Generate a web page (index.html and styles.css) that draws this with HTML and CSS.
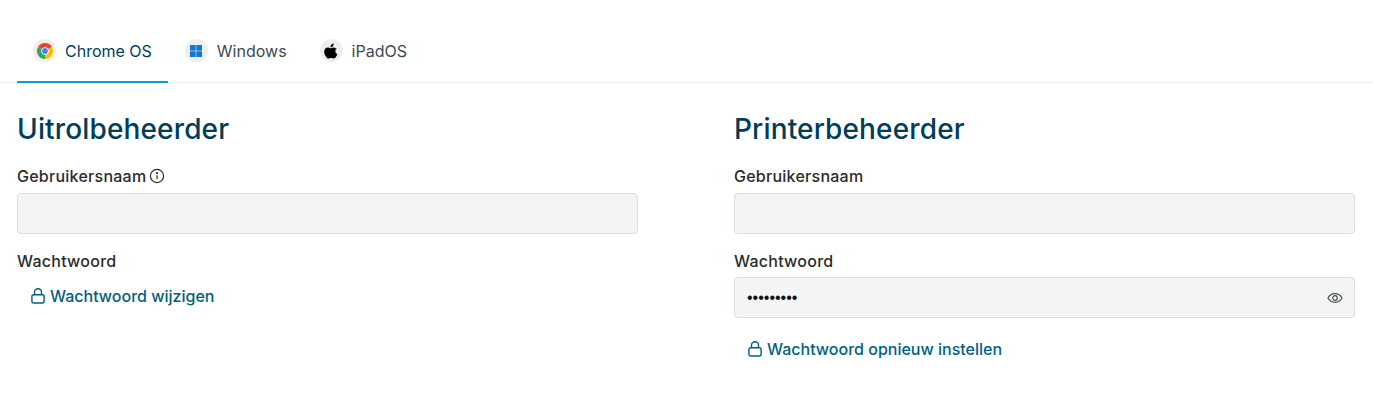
FILE: index.html
```html
<!DOCTYPE html>
<html lang="en">
<head>
    <meta charset="UTF-8">
    <meta name="viewport" content="width=device-width, initial-scale=1.0">
    <title>Beheerders</title>
    <link rel="stylesheet" href="styles.css">
</head>
<body>
    <nav class="tabs">
        <a class="tab active" href="#chrome">
            <span class="tab-icon">
                <svg width="16" height="16" viewBox="0 0 16 16">
                    <path d="M8 8 L1.07 4 A8 8 0 0 1 14.93 4 Z" fill="#ea4335"/>
                    <path d="M8 8 L14.93 4 A8 8 0 0 1 8 16 Z" fill="#fbbc04"/>
                    <path d="M8 8 L8 16 A8 8 0 0 1 1.07 4 Z" fill="#34a853"/>
                    <circle cx="8" cy="8" r="3.7" fill="#fff"/>
                    <circle cx="8" cy="8" r="2.9" fill="#4285f4"/>
                </svg>
            </span>
            Chrome OS
        </a>
        <a class="tab" href="#windows">
            <span class="tab-icon">
                <svg width="14" height="14" viewBox="0 0 14 14" fill="#0f78d4">
                    <rect x="1" y="1" width="5.7" height="5.7"/>
                    <rect x="7.3" y="1" width="5.7" height="5.7"/>
                    <rect x="1" y="7.3" width="5.7" height="5.7"/>
                    <rect x="7.3" y="7.3" width="5.7" height="5.7"/>
                </svg>
            </span>
            Windows
        </a>
        <a class="tab" href="#ipados">
            <span class="tab-icon">
                <svg width="14" height="16" viewBox="0 0 14 16" fill="#000">
                    <path d="M9.6 0.6c.1 1-.3 1.9-.8 2.6-.6.7-1.4 1.2-2.3 1.1-.1-.9.3-1.9.8-2.5C7.9 1.1 8.9.6 9.6.6z"/>
                    <path d="M12.9 5.5c-.9.6-1.5 1.500-1.500 2.700 0 1.400.8 2.400 2 2.900-.3.900-.7 1.700-1.200 2.500-.7 1-1.400 2-2.500 2-1 0-1.400-.6-2.600-.6s-1.600.6-2.600.6c-1.100 0-1.900-1.100-2.600-2.100C.9 12.200.2 10.400.2 8.700c0-2.700 1.800-4.200 3.500-4.200 1.100 0 2 .7 2.700.7.700 0 1.700-.8 3-.8 1 0 2.400.4 3.500 2.100z"/>
                </svg>
            </span>
            iPadOS
        </a>
    </nav>

    <div class="columns">
        <section class="panel">
            <h2>Uitrolbeheerder</h2>
            <div class="field">
                <label>Gebruikersnaam
                    <svg class="info" width="16" height="16" viewBox="0 0 16 16" fill="none" stroke="#2b2b2b" stroke-width="1.2">
                        <circle cx="8" cy="8" r="6.6"/>
                        <path d="M8 7.200v4"/>
                        <circle cx="8" cy="5" r="0.5" fill="#2b2b2b"/>
                    </svg>
                </label>
                <div class="input"></div>
            </div>
            <div class="field">
                <label>Wachtwoord</label>
                <a class="lock-link" href="#wijzigen">
                    <svg width="14" height="16" viewBox="0 0 14 16" fill="none" stroke="#005f7f" stroke-width="1.400">
                        <rect x="0.900" y="6.700" width="12.200" height="8.300" rx="1.800"/>
                        <path d="M3.500 6.700V4.300a3.500 3.500 0 0 1 7 0v2.400"/>
                    </svg>
                    Wachtwoord wijzigen
                </a>
            </div>
        </section>

        <section class="panel">
            <h2>Printerbeheerder</h2>
            <div class="field">
                <label>Gebruikersnaam</label>
                <div class="input"></div>
            </div>
            <div class="field">
                <label>Wachtwoord</label>
                <div class="input">
                    <span class="dots">•••••••••</span>
                    <svg class="eye" width="16" height="16" viewBox="0 0 16 16" fill="none" stroke="#4a4f52" stroke-width="1.200">
                        <path d="M1 8c1.500-2.700 4-4.300 7-4.300s5.500 1.600 7 4.300c-1.500 2.700-4 4.300-7 4.300S2.500 10.700 1 8z"/>
                        <circle cx="8" cy="8" r="2.300"/>
                    </svg>
                </div>
                <a class="lock-link" href="#opnieuw">
                    <svg width="14" height="16" viewBox="0 0 14 16" fill="none" stroke="#005f7f" stroke-width="1.400">
                        <rect x="0.900" y="6.700" width="12.200" height="8.300" rx="1.800"/>
                        <path d="M3.500 6.700V4.300a3.500 3.500 0 0 1 7 0v2.400"/>
                    </svg>
                    Wachtwoord opnieuw instellen
                </a>
            </div>
        </section>
    </div>
</body>
</html>
```

FILE: styles.css
```css
body {
    font-family: Inter, "Noto Sans", sans-serif;
    margin: 0;
    padding: 0;
    background-color: #fff;
    color: #2b2b2b;
}

.tabs {
    display: flex;
    gap: 1px;
    margin-top: 20px;
    padding-left: 17px;
    height: 63px;
    box-sizing: border-box;
    border-bottom: 1px solid #eef0f0;
}

.tab {
    display: flex;
    align-items: center;
    gap: 9px;
    height: 63px;
    box-sizing: border-box;
    padding: 0 16px;
    border-bottom: 2px solid transparent;
    color: #3d4a52;
    font-size: 16px;
    text-decoration: none;
}

.tab.active {
    color: #003f5c;
    border-bottom-color: #0a9ee0;
}

.tab-icon {
    display: flex;
    align-items: center;
    justify-content: center;
    width: 23px;
    height: 23px;
    border-radius: 50%;
    background-color: #eeeeee;
}

.columns {
    display: grid;
    grid-template-columns: 621px 621px;
    column-gap: 96px;
    padding: 0 18px 0 17px;
}

h2 {
    margin: 29px 0 20px;
    color: #003d5b;
    font-size: 28px;
    line-height: 34px;
    font-weight: 500;
    letter-spacing: 0.15px;
}

.field {
    margin-bottom: 17px;
}

label {
    display: flex;
    align-items: center;
    gap: 3px;
    height: 20px;
    margin-bottom: 7px;
    font-size: 16px;
    font-weight: 500;
    letter-spacing: 0.25px;
}

.field + .field label {
    margin-bottom: 6px;
}

.input {
    display: flex;
    align-items: center;
    justify-content: space-between;
    height: 41px;
    box-sizing: border-box;
    padding: 0 11px 0 12px;
    background-color: #f3f5f4;
    border: 1px solid #dcdfde;
    border-radius: 4px;
}

.dots {
    color: #111;
    font-family: "Liberation Sans", sans-serif;
    font-size: 16px;
}

.lock-link {
    display: flex;
    align-items: center;
    gap: 5px;
    margin-top: 15px;
    padding-left: 14px;
    color: #005f7f;
    font-size: 16px;
    font-weight: 500;
    text-decoration: none;
}

.input + .lock-link {
    margin-top: 21px;
}
```
